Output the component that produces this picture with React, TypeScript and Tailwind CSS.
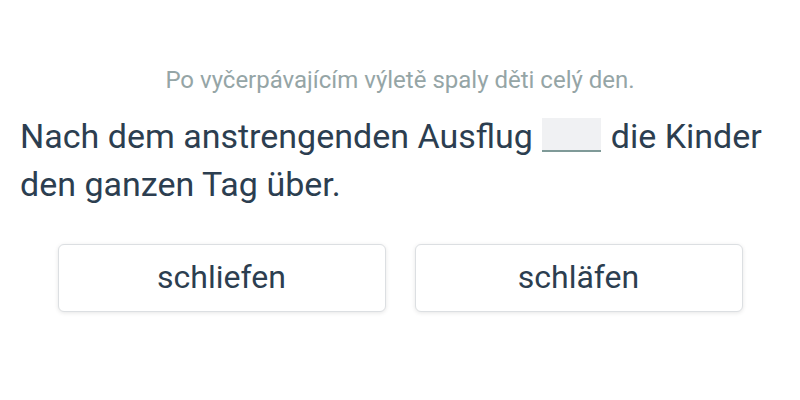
export default function App() {
  return (
    <div className="w-[800px] h-[400px] bg-white font-['Roboto',sans-serif] overflow-hidden">
      <div className="pt-[62px] text-center text-[24px] leading-[36px] text-[#95a5a6]">
        Po vyčerpávajícím výletě spaly děti celý den.
      </div>
      <div className="mt-[14px] px-5 text-[34px] leading-[48px] text-[#2c3e50]">
        Nach dem anstrengenden Ausflug{" "}
        <span className="inline-block w-[59px] h-[34px] mx-[1px] bg-[#f0f1f3] border-b-2 border-[#7f9a98] align-[-4px]"></span>{" "}
        die Kinder den ganzen Tag über.
      </div>
      <div className="mt-[36px] mx-auto w-[685px] grid grid-cols-2 gap-[29px]">
        <button className="h-[68px] pb-[3px] rounded-md border border-[#dcdfe2] bg-white shadow-[0_1px_4px_rgba(0,0,0,0.1)] text-[32px] text-[#2c3e50]">
          schliefen
        </button>
        <button className="h-[68px] pb-[3px] rounded-md border border-[#dcdfe2] bg-white shadow-[0_1px_4px_rgba(0,0,0,0.1)] text-[32px] text-[#2c3e50]">
          schläfen
        </button>
      </div>
    </div>
  );
}
